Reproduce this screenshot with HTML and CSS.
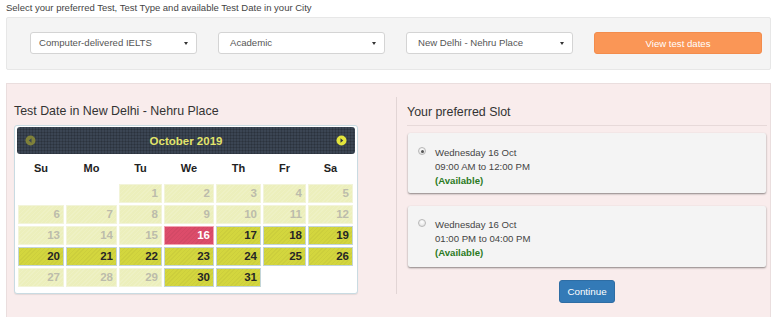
FILE: index.html
```html
<!DOCTYPE html>
<html>
<head>
	<meta charset="utf-8"/>
	<title>Select Test Date</title>
	<link rel="stylesheet" href="styles.css">
</head>
<body>
	<p class="intro">Select your preferred Test, Test Type and available Test Date in your City</p>

	<div class="filters">
		<div class="select first">Computer-delivered IELTS<span class="caret"></span></div>
		<div class="select">Academic<span class="caret"></span></div>
		<div class="select">New Delhi - Nehru Place<span class="caret"></span></div>
		<button class="btn-orange">View test dates</button>
	</div>

	<div class="booking">
		<div class="dates">
			<h3>Test Date in New Delhi - Nehru Place</h3>
			<div class="calendar">
				<div class="cal-head">
					<svg class="nav" width="11" height="11" viewBox="0 0 11 11"><circle cx="5.5" cy="5.5" r="5" fill="#7f8139"/><polygon points="6.5,3.3 3.8,5.5 6.5,7.7" fill="#3a4452"/></svg>
					<span class="month">October 2019</span>
					<svg class="nav" width="11" height="11" viewBox="0 0 11 11"><circle cx="5.5" cy="5.5" r="5" fill="#e2e43c"/><polygon points="4.5,3.3 7.2,5.5 4.5,7.7" fill="#2b3340"/></svg>
				</div>
				<div class="cal-grid">
					<div class="dow">Su</div>
					<div class="dow">Mo</div>
					<div class="dow">Tu</div>
					<div class="dow">We</div>
					<div class="dow">Th</div>
					<div class="dow">Fr</div>
					<div class="dow">Sa</div>

					<div></div>
					<div></div>
					<div class="day off">1</div>
					<div class="day off">2</div>
					<div class="day off">3</div>
					<div class="day off">4</div>
					<div class="day off">5</div>

					<div class="day off">6</div>
					<div class="day off">7</div>
					<div class="day off">8</div>
					<div class="day off">9</div>
					<div class="day off">10</div>
					<div class="day off">11</div>
					<div class="day off">12</div>

					<div class="day off">13</div>
					<div class="day off">14</div>
					<div class="day off">15</div>
					<div class="day selected">16</div>
					<div class="day open">17</div>
					<div class="day open">18</div>
					<div class="day open">19</div>

					<div class="day open">20</div>
					<div class="day open">21</div>
					<div class="day open">22</div>
					<div class="day open">23</div>
					<div class="day open">24</div>
					<div class="day open">25</div>
					<div class="day open">26</div>

					<div class="day off">27</div>
					<div class="day off">28</div>
					<div class="day off">29</div>
					<div class="day open">30</div>
					<div class="day open">31</div>
				</div>
			</div>
		</div>

		<div class="slots">
			<h3>Your preferred Slot</h3>
			<label class="slot">
				<span class="radio checked"></span>
				<span class="slot-text">
					Wednesday 16 Oct<br>
					09:00 AM to 12:00 PM<br>
					<b class="avail">(Available)</b>
				</span>
			</label>
			<label class="slot">
				<span class="radio"></span>
				<span class="slot-text">
					Wednesday 16 Oct<br>
					01:00 PM to 04:00 PM<br>
					<b class="avail">(Available)</b>
				</span>
			</label>
			<div class="actions">
				<button class="btn-blue">Continue</button>
			</div>
		</div>
	</div>
</body>
</html>
```

FILE: styles.css
```css
body {
	margin: 0;
	padding: 0 13px 0 6px;
	font-family: "Liberation Sans", Arial, sans-serif;
	color: #333;
	background: #fff;
}
.intro {
	margin: 0;
	padding-top: 1px;
	height: 16px;
	font-size: 9.5px;
	line-height: 13px;
	color: #444;
}
.filters {
	display: flex;
	gap: 21px;
	height: 53px;
	box-sizing: border-box;
	padding: 14px 0 0 23px;
	background: #f4f4f4;
	border: 1px solid #e7e7e7;
	border-radius: 2px;
}
.select {
	position: relative;
	width: 167px;
	height: 22px;
	box-sizing: border-box;
	padding-left: 11px;
	background: #fff;
	border: 1px solid #d4d4d4;
	border-radius: 3px;
	font-size: 9.6px;
	line-height: 20px;
	color: #555;
}
.select.first {
	padding-left: 8px;
}
.caret {
	position: absolute;
	right: 8px;
	top: 9px;
	border-left: 2px solid transparent;
	border-right: 2px solid transparent;
	border-top: 3.5px solid #333;
}
.btn-orange {
	width: 168px;
	height: 22px;
	padding: 0;
	background: #fa9656;
	border: 1px solid #f38c4c;
	border-radius: 3px;
	color: #fff;
	font-family: inherit;
	font-size: 9.6px;
}
.booking {
	display: flex;
	margin-top: 13px;
	height: 234px;
	box-sizing: border-box;
	padding: 13px 3px 0 7px;
	background: #f9ecec;
	border: 1px solid #eadede;
	border-bottom: 0;
}
h3 {
	margin: 0;
	font-size: 12.4px;
	font-weight: normal;
	line-height: 20px;
	color: #333;
}
.dates {
	width: 382px;
	align-self: flex-start;
	border-right: 1px solid #e2d5d5;
}
.dates h3 {
	margin: 4px 0 4px;
}
.calendar {
	width: 344px;
	box-sizing: border-box;
	padding: 1px 2px 6px;
	background: #fff;
	border: 1px solid #c9dbe2;
	border-radius: 3px;
	box-shadow: 0 1px 1px rgba(0, 0, 0, 0.08);
}
.cal-head {
	display: flex;
	align-items: center;
	justify-content: space-between;
	height: 27px;
	padding: 0 8px 0 8px;
	background-color: #3b4553;
	background-image:
		repeating-linear-gradient(0deg, rgba(0, 0, 0, 0.15) 0 1px, transparent 1px 3px),
		repeating-linear-gradient(90deg, rgba(0, 0, 0, 0.15) 0 1px, transparent 1px 3px);
	border-radius: 3px;
}
.month {
	color: #e2e46a;
	font-size: 11.5px;
	font-weight: bold;
}
.cal-grid {
	display: grid;
	grid-template-columns: 46px 51px 43px 50px 45px 43px 45px;
	grid-template-rows: 28px repeat(5, 19px);
	gap: 2px;
	margin-left: 1px;
}
.dow {
	text-align: center;
	font-size: 11px;
	font-weight: bold;
	line-height: 28px;
	color: #222;
}
.day {
	box-sizing: border-box;
	padding-right: 3px;
	text-align: right;
	font-size: 11.5px;
	font-weight: bold;
	line-height: 17px;
	border: 1px solid;
}
.day.off {
	color: #bcbcab;
	background: #ecefbc repeating-linear-gradient(135deg, rgba(255, 255, 255, 0.12) 0 1px, transparent 1px 3px);
	border-color: #f2f4d9;
}
.day.open {
	color: #262626;
	background: #d3d63e repeating-linear-gradient(135deg, rgba(0, 0, 0, 0.035) 0 1px, transparent 1px 3px);
	border-color: #c3d5d8;
}
.day.selected {
	color: #fff;
	background: #dc4c6a repeating-linear-gradient(135deg, rgba(0, 0, 0, 0.04) 0 1px, transparent 1px 3px);
	border-color: #f3a3b1;
}
.slots {
	flex: 1;
	padding-left: 10px;
}
.slots h3 {
	margin-top: 5px;
	padding-bottom: 3px;
	border-bottom: 1px solid #e7d9d9;
	margin-bottom: 7px;
}
.slot {
	display: flex;
	height: 60px;
	box-sizing: border-box;
	margin: 0 1px 13px 1px;
	padding: 13px 0 0 10px;
	background: #f4f4f4;
	border-radius: 2px;
	box-shadow: 0 1px 2px rgba(0, 0, 0, 0.45);
}
.slot + .slot {
	height: 61px;
	padding-top: 12px;
}
.radio {
	width: 8px;
	height: 8px;
	margin: 1px 9px 0 0;
	box-sizing: border-box;
	border: 1px solid #b8b8b8;
	border-radius: 50%;
	background: radial-gradient(circle at 50% 35%, #fff, #dcdcdc);
	position: relative;
}
.radio.checked::after {
	content: "";
	position: absolute;
	left: 1.5px;
	top: 1.5px;
	width: 3px;
	height: 3px;
	border-radius: 50%;
	background: #555;
}
.slot-text {
	font-size: 9.6px;
	line-height: 14px;
	color: #444;
}
.avail {
	color: #2b7a1f;
}
.actions {
	display: flex;
	justify-content: center;
}
.btn-blue {
	width: 56px;
	height: 23px;
	padding: 0;
	background: #337ab7;
	border: 1px solid #2e6da4;
	border-radius: 3px;
	color: #fff;
	font-family: inherit;
	font-size: 9.8px;
}
```
